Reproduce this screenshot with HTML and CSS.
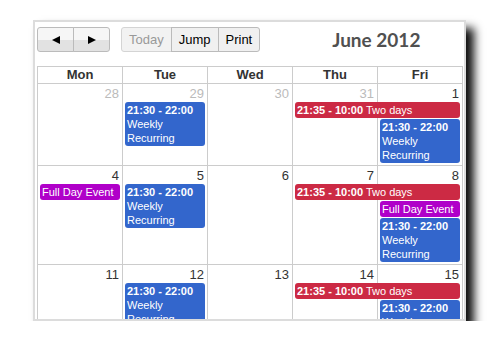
FILE: index.html
```html
<!DOCTYPE html>
<html lang="en">
<head>
  <meta charset="UTF-8">
  <title>Calendar</title>
  <link rel="stylesheet" href="styles.css">
</head>
<body>
  <div class="calendar">
    <div class="toolbar">
      <div class="btn-group">
        <button class="btn arrow"><svg width="8" height="8" viewBox="0 0 8 8"><polygon points="8,0 8,8 0,4" fill="#000"/></svg></button>
        <button class="btn arrow"><svg width="8" height="8" viewBox="0 0 8 8"><polygon points="0,0 0,8 8,4" fill="#000"/></svg></button>
      </div>
      <div class="btn-group">
        <button class="btn disabled">Today</button>
        <button class="btn">Jump</button>
        <button class="btn">Print</button>
      </div>
      <h2 class="title">June 2012</h2>
    </div>

    <div class="grid">
      <div class="head">
        <div class="head-cell">Mon</div>
        <div class="head-cell">Tue</div>
        <div class="head-cell">Wed</div>
        <div class="head-cell">Thu</div>
        <div class="head-cell">Fri</div>
      </div>

      <div class="week">
        <div class="num other">28</div>
        <div class="num other">29</div>
        <div class="num other">30</div>
        <div class="num other">31</div>
        <div class="num">1</div>
        <div class="stack col-2">
          <div class="event blue"><b>21:30 - 22:00</b> Weekly Recurring</div>
        </div>
        <div class="bar">
          <div class="event red"><b>21:35 - 10:00</b> Two days</div>
        </div>
        <div class="stack below col-5">
          <div class="event blue"><b>21:30 - 22:00</b> Weekly Recurring</div>
        </div>
      </div>

      <div class="week">
        <div class="num">4</div>
        <div class="num">5</div>
        <div class="num">6</div>
        <div class="num">7</div>
        <div class="num">8</div>
        <div class="stack col-1">
          <div class="event purple">Full Day Event</div>
        </div>
        <div class="stack col-2">
          <div class="event blue"><b>21:30 - 22:00</b> Weekly Recurring</div>
        </div>
        <div class="bar">
          <div class="event red"><b>21:35 - 10:00</b> Two days</div>
        </div>
        <div class="stack below col-5">
          <div class="event purple">Full Day Event</div>
          <div class="event blue"><b>21:30 - 22:00</b> Weekly Recurring</div>
        </div>
      </div>

      <div class="week">
        <div class="num">11</div>
        <div class="num">12</div>
        <div class="num">13</div>
        <div class="num">14</div>
        <div class="num">15</div>
        <div class="stack col-2">
          <div class="event blue"><b>21:30 - 22:00</b> Weekly Recurring</div>
        </div>
        <div class="bar">
          <div class="event red"><b>21:35 - 10:00</b> Two days</div>
        </div>
        <div class="stack below col-5">
          <div class="event blue"><b>21:30 - 22:00</b> Weekly Recurring</div>
        </div>
      </div>
    </div>
  </div>
</body>
</html>
```

FILE: styles.css
```css
body {
  margin: 0;
  background: #fff;
  font-family: "Liberation Sans", Arial, sans-serif;
  color: #333;
}
.calendar {
  box-sizing: border-box;
  margin: 20px 0 0 33px;
  width: 433px;
  height: 301px;
  border: 2px solid #dcdcdc;
  padding: 5px 1px 0 2px;
  background: #fff;
  overflow: hidden;
  box-shadow: 8px 8px 9px rgba(0, 0, 0, 0.95);
}

/* toolbar */
.toolbar {
  display: flex;
  align-items: center;
  height: 25px;
  margin-bottom: 14px;
}
.btn-group {
  display: flex;
  margin-right: 11px;
}
.btn {
  box-sizing: border-box;
  height: 25px;
  margin: 0 0 0 -1px;
  padding: 0 7px;
  border: 1px solid #bbb;
  border-radius: 0;
  background: #f0f0f0;
  font-family: "Liberation Sans", Arial, sans-serif;
  font-size: 13px;
  color: #000;
}
.btn:first-child {
  margin-left: 0;
  border-radius: 3px 0 0 3px;
}
.btn:last-child {
  border-radius: 0 3px 3px 0;
}
.btn.arrow {
  width: 37px;
  display: flex;
  align-items: center;
  justify-content: center;
  background: linear-gradient(#f6f6f6 50%, #e2e2e2 50%);
}
.btn.disabled {
  color: #999;
  border-color: #d4d4d4;
  background: #f2f2f2;
}
.title {
  margin: 0 0 0 61px;
  font-family: Lato, "Open Sans", sans-serif;
  font-size: 19px;
  font-weight: bold;
  color: #505050;
}

/* month grid */
.grid {
  border-left: 1px solid #ccc;
}
.head {
  display: grid;
  grid-template-columns: repeat(5, 85px);
  border-top: 1px solid #ccc;
  border-bottom: 1px solid #ccc;
}
.head-cell {
  border-right: 1px solid #ccc;
  text-align: center;
  font-size: 13px;
  font-weight: bold;
  line-height: 16px;
  color: #333;
}
.week {
  display: grid;
  grid-template-columns: repeat(5, 85px);
  grid-template-rows: auto auto 1fr;
  padding-bottom: 1px;
  border-bottom: 1px solid #ccc;
  background-image: linear-gradient(to right, transparent 84px, #ccc 84px);
  background-size: 85px 100%;
}
.num {
  grid-row: 1;
  padding: 2px 4px 0 0;
  text-align: right;
  font-size: 13px;
  line-height: 16px;
  color: #333;
}
.num.other {
  color: #bbb;
}
.stack {
  grid-row: 2 / 4;
}
.stack.below {
  grid-row: 3;
}
.col-1 { grid-column: 1; }
.col-2 { grid-column: 2; }
.col-5 { grid-column: 5; }
.bar {
  grid-row: 2;
  grid-column: 4 / 6;
}

.event {
  margin: 0 3px 1px 2px;
  padding: 1px 2px;
  border-radius: 3px;
  font-size: 11px;
  line-height: 14px;
  color: #fff;
}
.event.blue { background: #3366cc; }
.event.red { background: #cc2a44; }
.event.purple { background: #b000c9; }
```
